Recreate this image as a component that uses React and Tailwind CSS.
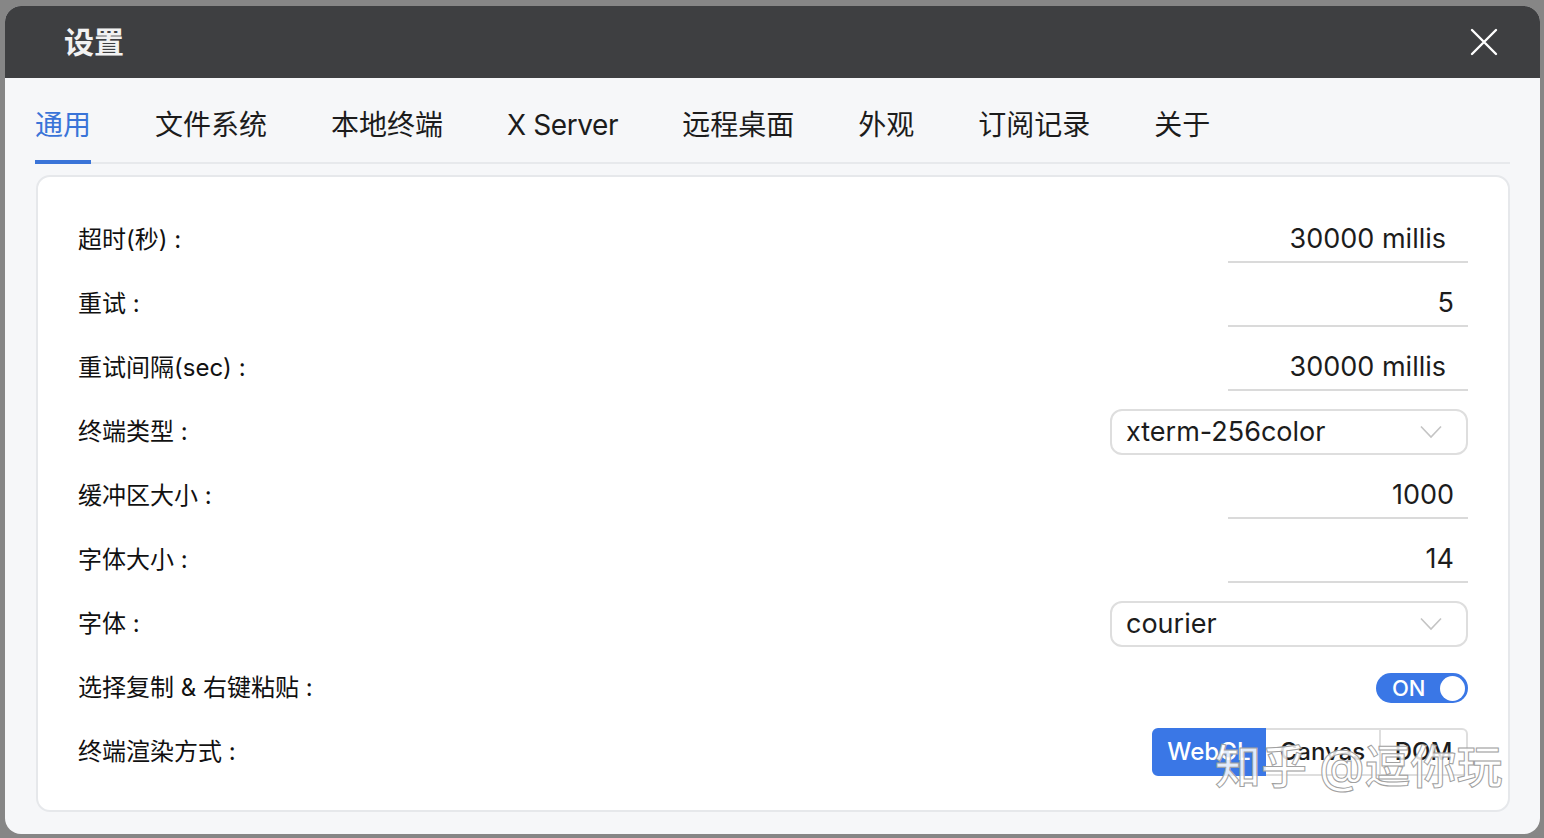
import React, { useState } from 'react';

const TABS = ['通用', '文件系统', '本地终端', 'X Server', '远程桌面', '外观', '订阅记录', '关于'];

const ROWS = [
  { label: '超时(秒) :', type: 'input', value: '30000 millis' },
  { label: '重试 :', type: 'input', value: '5' },
  { label: '重试间隔(sec) :', type: 'input', value: '30000 millis' },
  { label: '终端类型 :', type: 'select', value: 'xterm-256color' },
  { label: '缓冲区大小 :', type: 'input', value: '1000' },
  { label: '字体大小 :', type: 'input', value: '14' },
  { label: '字体 :', type: 'select', value: 'courier' },
  { label: '选择复制 & 右键粘贴 :', type: 'switch' },
  { label: '终端渲染方式 :', type: 'segment' },
];

const Chevron = () => (
  <svg width="22" height="14" viewBox="0 0 22 14" fill="none" stroke="#c4c4c4" strokeWidth="1.6">
    <path d="M1 1.5 L11 12 L21 1.5" />
  </svg>
);

const Field = ({ row }) => {
  const [on, setOn] = useState(true);
  const [mode, setMode] = useState('WebGL');

  if (row.type === 'input') {
    const hasUnit = row.value.includes('millis');
    return (
      <div
        className={`w-[240px] h-[46px] border-b-2 border-[#dadada] flex items-center justify-end text-[27px] text-[#1c1c1c] ${hasUnit ? 'pr-[22px]' : 'pr-[14px]'}`}
      >
        {row.value}
      </div>
    );
  }
  if (row.type === 'select') {
    return (
      <div className="w-[358px] h-[46px] rounded-[12px] border-2 border-[#dedede] bg-white flex items-center justify-between pl-[14px] pr-[24px] text-[27px] text-[#1c1c1c]">
        <span>{row.value}</span>
        <Chevron />
      </div>
    );
  }
  if (row.type === 'switch') {
    return (
      <button
        onClick={() => setOn(!on)}
        className="w-[92px] h-[30px] rounded-full bg-[#3a77e6] flex items-center justify-between pl-[16px] pr-[3px]"
      >
        <span className="text-[22px] font-medium text-white leading-none">ON</span>
        <span className="w-[25px] h-[25px] rounded-full bg-white" />
      </button>
    );
  }
  return (
    <div className="flex h-[48px] w-[316px] text-[24px] font-medium">
      {['WebGL', 'Canvas', 'DOM'].map((m, i) => (
        <button
          key={m}
          onClick={() => setMode(m)}
          className={`h-full flex items-center justify-center ${i === 0 ? 'w-[114px] rounded-l-[6px]' : i === 1 ? 'w-[115px]' : 'w-[87px] rounded-r-[6px]'} ${
            mode === m ? 'bg-[#3a77e6] text-white border-2 border-[#3a77e6]' : 'bg-white text-[#1c1c1c] border-2 border-l-0 border-[#dedede]'
          }`}
        >
          {m}
        </button>
      ))}
    </div>
  );
};

export default function App() {
  const [tab, setTab] = useState(0);

  return (
    <div
      className="w-[1544px] h-[838px] bg-[#868686] pt-[6px] pl-[5px] pr-[4px] pb-[4px]"
      style={{ fontFamily: 'Inter, "Noto Sans CJK SC", sans-serif' }}
    >
      <div className="relative h-[828px] rounded-[16px] bg-[#f6f7f9] overflow-hidden flex flex-col">
        {/* Header */}
        <div className="h-[72px] bg-[#3e3f41] flex items-center justify-between pl-[59px] pr-[42px]">
          <span className="text-[30px] font-semibold text-[#f2f2f2]">设置</span>
          <svg width="28" height="28" viewBox="0 0 28 28" stroke="#ffffff" strokeWidth="2.4" strokeLinecap="round">
            <path d="M2 2 L26 26 M26 2 L2 26" />
          </svg>
        </div>

        {/* Tabs */}
        <div className="mx-[30px] h-[86px] border-b-2 border-[#e7e9ec] flex gap-[64px]">
          {TABS.map((t, i) => (
            <button
              key={t}
              onClick={() => setTab(i)}
              className={`relative h-full flex items-center pt-[10px] text-[28px] ${t === 'X Server' ? 'tracking-[-0.4px]' : ''} ${i === tab ? 'text-[#3a74d8]' : 'text-[#1c1c1c]'}`}
            >
              {t}
              {i === tab && <span className="absolute left-0 right-0 bottom-[-2px] h-[4px] bg-[#3a74d8]" />}
            </button>
          ))}
        </div>

        {/* Card */}
        <div className="mt-[11px] ml-[31px] mr-[30px] h-[637px] rounded-[14px] bg-white border-2 border-[#e6e8eb] pt-[31px] px-[40px]">
          {ROWS.map((row) => (
            <div key={row.label} className="h-[64px] flex items-center justify-between">
              <span className="text-[24px] text-[#111111]">{row.label}</span>
              <Field row={row} />
            </div>
          ))}
        </div>

        {/* Watermark */}
        <div className="absolute left-[1210px] top-[726px] text-[46px] font-medium text-white/85 [-webkit-text-stroke:1px_#a0a0a0] pointer-events-none">
          知乎 @逗你玩
        </div>
      </div>
    </div>
  );
}
